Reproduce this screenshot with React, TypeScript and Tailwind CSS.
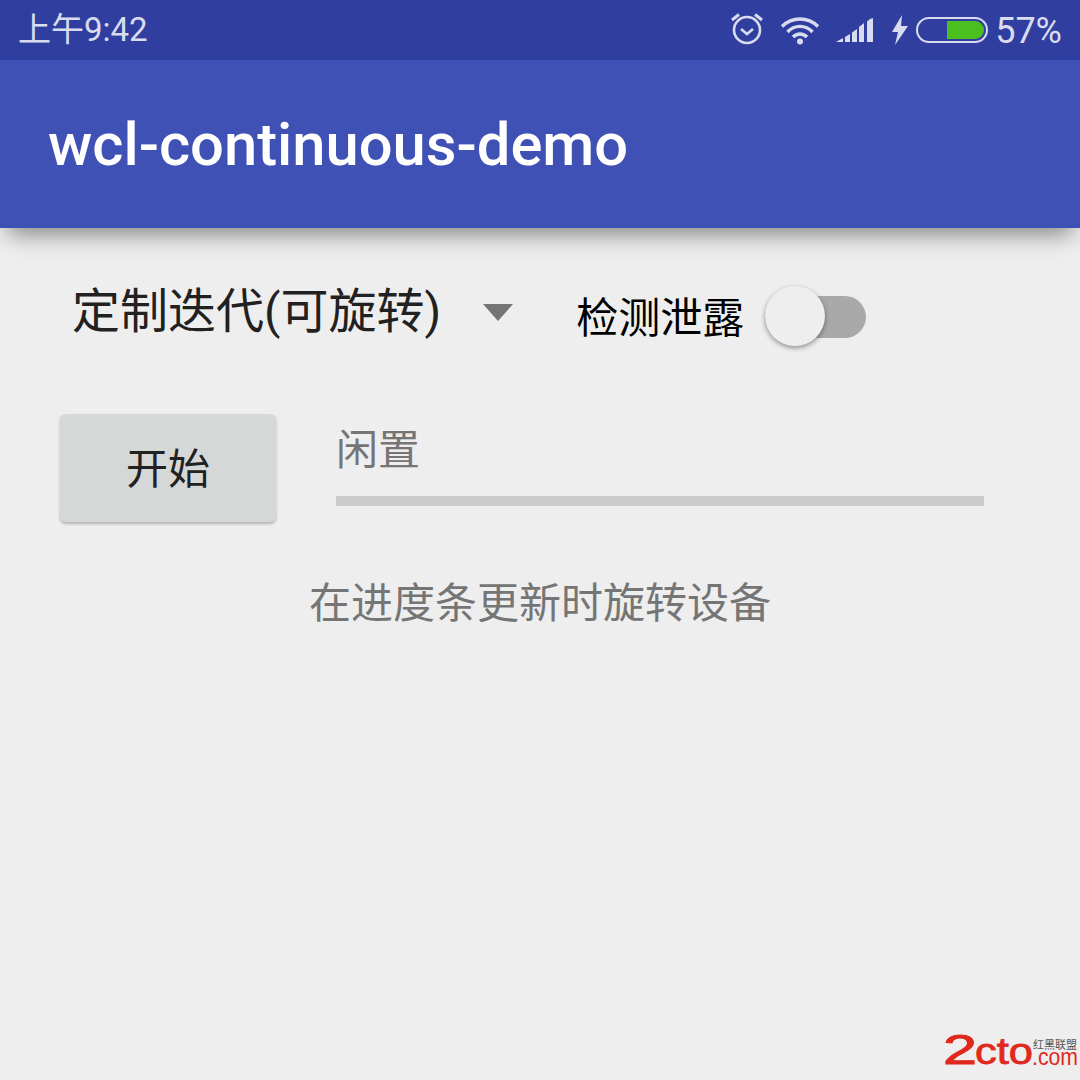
import React from "react";

const cjk = "font-['Roboto','Noto_Sans_CJK_SC',sans-serif]";

function StatusIcons() {
  const c = "#d9dcef";
  return (
    <div className="flex items-center">
      <svg width="34" height="34" viewBox="0 0 34 34" className="mt-[-2px]" fill="none" stroke={c}>
        <circle cx="17" cy="18" r="13" strokeWidth="2.6" />
        <path d="M11 17l6 5 6-5" strokeWidth="2.6" />
        <path d="M2 8l7-5.5M32 8l-7-5.5" strokeWidth="3" />
      </svg>
      <svg width="40" height="30" viewBox="0 0 40 30" className="ml-[16px]" fill="none" stroke={c} strokeWidth="3.4">
        <path d="M2 11.5C12 1.5 28 1.5 38 11.5" />
        <path d="M7.5 17C14.5 9.5 25.5 9.5 32.5 17" />
        <path d="M13 22C17 18 23 18 27 22" />
        <circle cx="20" cy="26.5" r="3" fill={c} stroke="none" />
      </svg>
      <svg width="38" height="26" viewBox="0 0 38 26" className="ml-[16px]" fill={c}>
        <path d="M0 25L7 21V25Z" />
        <path d="M9 20L14 17V25H9Z" />
        <path d="M16 15.5L21 12V25H16Z" />
        <path d="M23 10L28 6V25H23Z" />
        <path d="M31 4.5Q34 1 37 1V25H31Z" />
      </svg>
      <svg width="18" height="30" viewBox="0 0 18 30" className="ml-[17px]" fill={c}>
        <path d="M11 0L1 17H7L4 30L17 11H10Z" />
      </svg>
      <div className="ml-[7px] flex h-[26px] w-[72px] items-center justify-end rounded-[13px] border-2 border-[#d9dcef] pr-[2px]">
        <div className="h-[18px] w-[37px] rounded-r-[9px] bg-[#4cbf20]" />
      </div>
      <span className="ml-[7px] mt-[1px] text-[36px] leading-none text-[#d9dcef] font-['Roboto',sans-serif]">57%</span>
    </div>
  );
}

function Logo() {
  const red = "#e0281c";
  return (
    <svg width="138" height="44" viewBox="0 0 138 44" className="absolute bottom-[8px] right-0">
      <text x="1" y="36" textLength="34" lengthAdjust="spacingAndGlyphs" fontFamily="Liberation Sans, sans-serif" fontSize="42" fill={red} stroke={red} strokeWidth="1">
        2
      </text>
      <text x="33" y="36" textLength="58" lengthAdjust="spacingAndGlyphs" fontFamily="Liberation Sans, sans-serif" fontSize="36" fill={red} stroke={red} strokeWidth="0.8">
        cto
      </text>
      <text x="91" y="21" textLength="44" lengthAdjust="spacingAndGlyphs" fontFamily="Noto Sans CJK SC, sans-serif" fontSize="11" fill="#555">
        红黑联盟
      </text>
      <text x="90" y="37" textLength="46" lengthAdjust="spacingAndGlyphs" fontFamily="Liberation Sans, sans-serif" fontSize="23" fill={red}>
        .com
      </text>
    </svg>
  );
}

export default function App() {
  return (
    <div className={`relative flex h-[1080px] w-[1080px] flex-col overflow-hidden bg-[#eeeeee] ${cjk}`}>
      <div className="flex h-[60px] shrink-0 items-center justify-between bg-[#303f9f] pl-[18px] pr-[18px]">
        <span className="mt-[-2px] text-[33px] leading-none text-[#d9dcef]">上午9:42</span>
        <StatusIcons />
      </div>
      <div className="z-10 flex h-[168px] shrink-0 items-center bg-[#3f51b5] pl-[48px] shadow-[0_14px_22px_-8px_rgba(0,0,0,0.45)]">
        <span className="mt-[4px] text-[59.7px] font-medium leading-none text-white">wcl-continuous-demo</span>
      </div>
      <div className="flex h-[186px] shrink-0 items-center pl-[72px] pb-[4px]">
        <span className="mt-[-14px] text-[48px] leading-none text-[#212121]">定制迭代(可旋转)</span>
        <div className="ml-[42px] mt-[-14px] h-0 w-0 border-x-[15px] border-t-[17px] border-x-transparent border-t-[#757575]" />
        <span className="ml-[63px] text-[42px] leading-none text-black">检测泄露</span>
        <div className="relative ml-[21px] mt-[-4px] h-[42px] w-[101px] rounded-full bg-[#a9a9a9]">
          <div className="absolute left-0 top-[-10px] h-[60px] w-[60px] rounded-full bg-[#eeeeee] shadow-[0_2px_5px_rgba(0,0,0,0.4)]" />
        </div>
      </div>
      <div className="flex items-start pl-[60px]">
        <button className="h-[108px] w-[216px] rounded-[6px] bg-[#d6d7d7] pt-[4px] text-[42px] leading-none text-[#212121] shadow-[0_2px_3px_rgba(0,0,0,0.25)]">
          开始
        </button>
        <div className="ml-[60px] flex w-[648px] flex-col">
          <span className="h-[82px] pt-[16px] text-[42px] leading-none text-[#757575]">闲置</span>
          <div className="h-[10px] bg-[#cccccc]" />
        </div>
      </div>
      <p className="mt-[61px] text-center text-[42px] leading-none text-[#757575]">在进度条更新时旋转设备</p>
      <Logo />
    </div>
  );
}
